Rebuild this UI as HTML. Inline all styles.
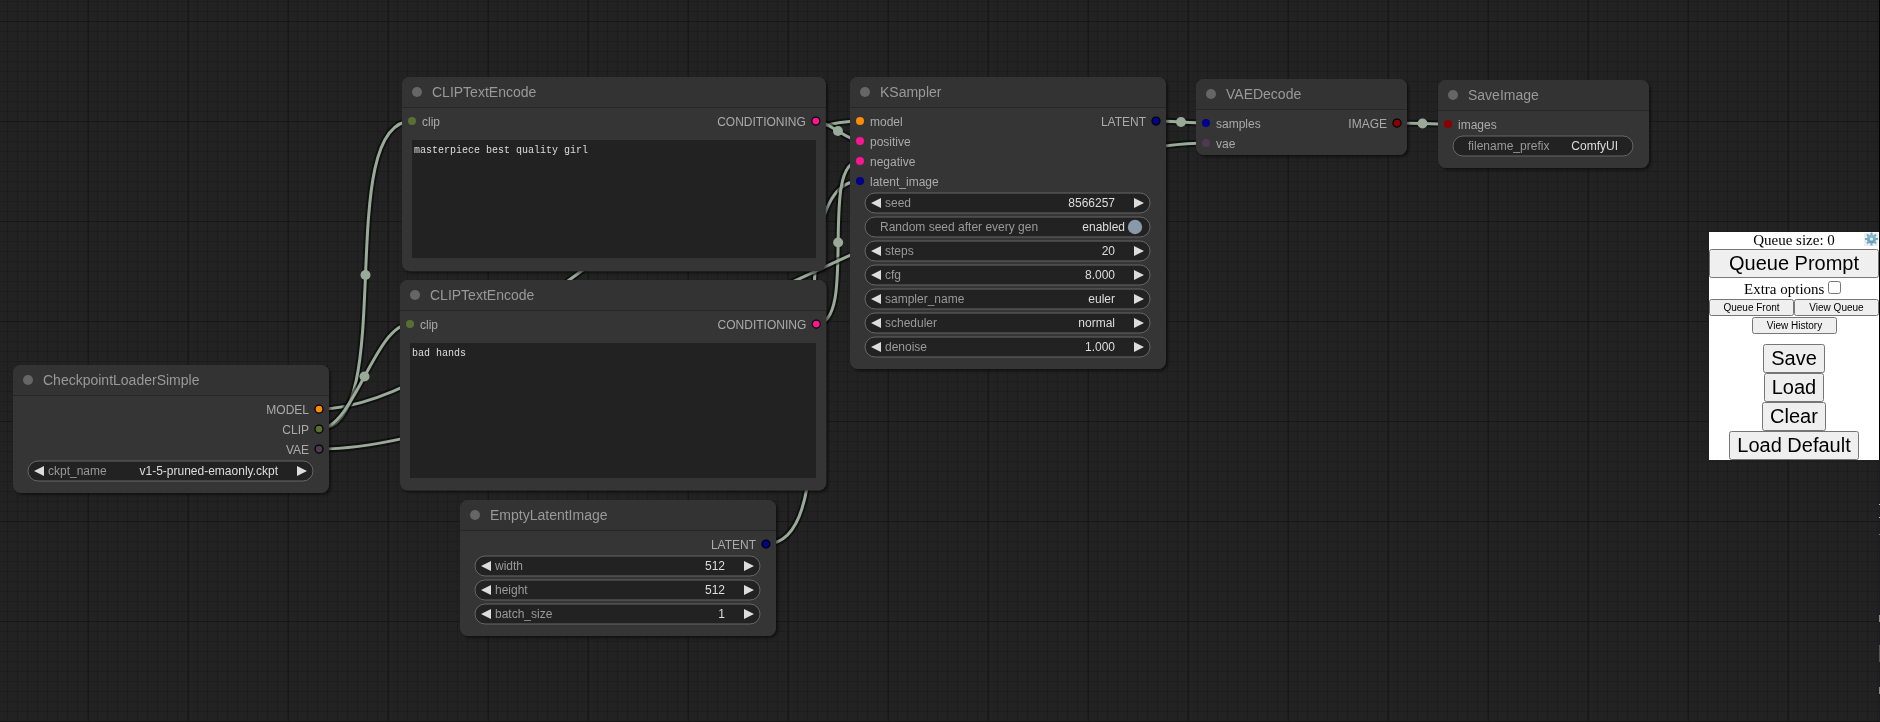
<!DOCTYPE html>
<html><head><meta charset="utf-8"><title>ComfyUI</title>
<style>
html,body{margin:0;padding:0;width:1880px;height:722px;overflow:hidden;background:#222;}
#main{position:absolute;left:0;top:0;will-change:transform;}
.tt{font:14px "Liberation Sans",sans-serif;fill:#999;}
.st{font:12px "Liberation Sans",sans-serif;fill:#aaa;}
.wl{font:12px "Liberation Sans",sans-serif;fill:#999;}
.wv{font:12px "Liberation Sans",sans-serif;fill:#ddd;}
.ta{position:absolute;background:#222;color:#ddd;font:10px/1.15 "Liberation Mono",monospace;padding:5px 2px 2px 2px;box-sizing:border-box;white-space:pre-wrap;overflow:hidden;z-index:1;will-change:transform;}
.menu{position:absolute;left:1709px;top:232px;width:170px;height:228px;background:#fff;color:#000;text-align:center;font:15px "Liberation Serif",serif;z-index:100;will-change:transform;}
.menu .b{position:absolute;font-family:"Liberation Sans",sans-serif;padding:0;margin:0;box-sizing:border-box;color:#000;}
.qs{position:absolute;left:0;top:0;width:170px;height:17px;line-height:17px;}
.gear{position:absolute;left:155px;top:1px;width:14px;height:13px;background:#eee;}
.gsvg{position:absolute;left:148px;top:-7px;}
.eo{position:absolute;left:0;top:47px;width:170px;height:20px;line-height:20px;}
.eo input{position:absolute;left:119px;top:2px;margin:0;width:13px;height:13px;}
</style></head><body>
<svg id="main" width="1880" height="722" viewBox="0 0 1880 722">
<defs>
<pattern id="gmin" width="10" height="10" patternUnits="userSpaceOnUse" x="7" y="1"><rect width="10" height="1" fill="#1d1d1d"/><rect width="1" height="10" fill="#1d1d1d"/></pattern>
<pattern id="gmaj" width="100" height="100" patternUnits="userSpaceOnUse" x="88" y="21"><rect width="100" height="1" fill="#171717"/><rect width="1" height="100" fill="#181818"/></pattern>
<filter id="sh" x="-10%" y="-10%" width="130%" height="130%"><feDropShadow dx="2" dy="2" stdDeviation="1.5" flood-color="#000" flood-opacity="0.5"/></filter>
</defs>
<rect width="1880" height="722" fill="#222"/>
<rect width="1880" height="722" fill="url(#gmin)"/>
<rect width="1880" height="722" fill="url(#gmaj)"/>
<g fill="none" stroke-linejoin="round">
<path d="M319 409C472.22 409 706.78 121 860 121" stroke="rgba(0,0,0,0.5)" stroke-width="7"/>
<path d="M319 409C472.22 409 706.78 121 860 121" stroke="#9a9" stroke-width="3"/>
<path d="M766 544C859.74 544 766.26 181 860 181" stroke="rgba(0,0,0,0.5)" stroke-width="7"/>
<path d="M766 544C859.74 544 766.26 181 860 181" stroke="#9a9" stroke-width="3"/>
<path d="M319 429C399.43 429 331.57 121 412 121" stroke="rgba(0,0,0,0.5)" stroke-width="7"/>
<path d="M319 429C399.43 429 331.57 121 412 121" stroke="#9a9" stroke-width="3"/>
<path d="M815.85 121C827.96 121 847.88 141 860 141" stroke="rgba(0,0,0,0.5)" stroke-width="7"/>
<path d="M815.85 121C827.96 121 847.88 141 860 141" stroke="#9a9" stroke-width="3"/>
<path d="M319 429C353.74 429 375.26 324 410 324" stroke="rgba(0,0,0,0.5)" stroke-width="7"/>
<path d="M319 429C353.74 429 375.26 324 410 324" stroke="#9a9" stroke-width="3"/>
<path d="M816.28 324C858.47 324 817.81 161 860 161" stroke="rgba(0,0,0,0.5)" stroke-width="7"/>
<path d="M816.28 324C858.47 324 817.81 161 860 161" stroke="#9a9" stroke-width="3"/>
<path d="M1156 121C1168.51 121 1193.49 123 1206 123" stroke="rgba(0,0,0,0.5)" stroke-width="7"/>
<path d="M1156 121C1168.51 121 1193.49 123 1206 123" stroke="#9a9" stroke-width="3"/>
<path d="M319 449C553.57 449 971.43 143 1206 143" stroke="rgba(0,0,0,0.5)" stroke-width="7"/>
<path d="M319 449C553.57 449 971.43 143 1206 143" stroke="#9a9" stroke-width="3"/>
<path d="M1397 123C1409.75 123 1435.25 124 1448 124" stroke="rgba(0,0,0,0.5)" stroke-width="7"/>
<path d="M1397 123C1409.75 123 1435.25 124 1448 124" stroke="#9a9" stroke-width="3"/>
</g>
<g fill="#9a9">
<circle cx="589.5" cy="265" r="5"/>
<circle cx="813" cy="362.5" r="5"/>
<circle cx="365.5" cy="275" r="5"/>
<circle cx="837.92" cy="131" r="5"/>
<circle cx="364.5" cy="376.5" r="5"/>
<circle cx="838.14" cy="242.5" r="5"/>
<circle cx="1181" cy="122" r="5"/>
<circle cx="762.5" cy="296" r="5"/>
<circle cx="1422.5" cy="123.5" r="5"/>
</g>
<g transform="translate(400 310)">
<rect x="0" y="-30" width="426.28" height="210.61" rx="8" fill="#353535" filter="url(#sh)"/>
<path d="M0 -22a8 8 0 0 1 8 -8H418.28a8 8 0 0 1 8 8V0H0Z" fill="#333"/>
<rect x="0" y="0" width="426.28" height="1" fill="rgba(0,0,0,0.25)"/>
<circle cx="15" cy="-15" r="5" fill="#666"/>
<text x="30" y="-10" class="tt">CLIPTextEncode</text>
<circle cx="10" cy="14" r="4" fill="#5a7032"/>
<text x="20" y="19" class="st">clip</text>
<circle cx="416.28" cy="14" r="4" fill="#ff1493" stroke="#000" stroke-width="1.25"/>
<text x="406.28" y="19" class="st" text-anchor="end">CONDITIONING</text>
</g>
<g transform="translate(402 107)">
<rect x="0" y="-30" width="423.85" height="194.31" rx="8" fill="#353535" filter="url(#sh)"/>
<path d="M0 -22a8 8 0 0 1 8 -8H415.85a8 8 0 0 1 8 8V0H0Z" fill="#333"/>
<rect x="0" y="0" width="423.85" height="1" fill="rgba(0,0,0,0.25)"/>
<circle cx="15" cy="-15" r="5" fill="#666"/>
<text x="30" y="-10" class="tt">CLIPTextEncode</text>
<circle cx="10" cy="14" r="4" fill="#5a7032"/>
<text x="20" y="19" class="st">clip</text>
<circle cx="413.85" cy="14" r="4" fill="#ff1493" stroke="#000" stroke-width="1.25"/>
<text x="403.85" y="19" class="st" text-anchor="end">CONDITIONING</text>
</g>
<g transform="translate(460 530)">
<rect x="0" y="-30" width="316" height="136" rx="8" fill="#353535" filter="url(#sh)"/>
<path d="M0 -22a8 8 0 0 1 8 -8H308a8 8 0 0 1 8 8V0H0Z" fill="#333"/>
<rect x="0" y="0" width="316" height="1" fill="rgba(0,0,0,0.25)"/>
<circle cx="15" cy="-15" r="5" fill="#666"/>
<text x="30" y="-10" class="tt">EmptyLatentImage</text>
<circle cx="306" cy="14" r="4" fill="#00008b" stroke="#000" stroke-width="1.25"/>
<text x="296" y="19" class="st" text-anchor="end">LATENT</text>
<rect x="15" y="26" width="285" height="20" rx="10" fill="#222" stroke="#666" stroke-width="1"/>
<path d="M31 31L21 36L31 41ZM284 31L294 36L284 41Z" fill="#ddd"/>
<text x="35" y="40" class="wl">width</text>
<text x="265" y="40" class="wv" text-anchor="end">512</text>
<rect x="15" y="50" width="285" height="20" rx="10" fill="#222" stroke="#666" stroke-width="1"/>
<path d="M31 55L21 60L31 65ZM284 55L294 60L284 65Z" fill="#ddd"/>
<text x="35" y="64" class="wl">height</text>
<text x="265" y="64" class="wv" text-anchor="end">512</text>
<rect x="15" y="74" width="285" height="20" rx="10" fill="#222" stroke="#666" stroke-width="1"/>
<path d="M31 79L21 84L31 89ZM284 79L294 84L284 89Z" fill="#ddd"/>
<text x="35" y="88" class="wl">batch_size</text>
<text x="265" y="88" class="wv" text-anchor="end">1</text>
</g>
<g transform="translate(850 107)">
<rect x="0" y="-30" width="316" height="292" rx="8" fill="#353535" filter="url(#sh)"/>
<path d="M0 -22a8 8 0 0 1 8 -8H308a8 8 0 0 1 8 8V0H0Z" fill="#333"/>
<rect x="0" y="0" width="316" height="1" fill="rgba(0,0,0,0.25)"/>
<circle cx="15" cy="-15" r="5" fill="#666"/>
<text x="30" y="-10" class="tt">KSampler</text>
<circle cx="10" cy="14" r="4" fill="#ff8c00"/>
<text x="20" y="19" class="st">model</text>
<circle cx="10" cy="34" r="4" fill="#ff1493"/>
<text x="20" y="39" class="st">positive</text>
<circle cx="10" cy="54" r="4" fill="#ff1493"/>
<text x="20" y="59" class="st">negative</text>
<circle cx="10" cy="74" r="4" fill="#00008b"/>
<text x="20" y="79" class="st">latent_image</text>
<circle cx="306" cy="14" r="4" fill="#00008b" stroke="#000" stroke-width="1.25"/>
<text x="296" y="19" class="st" text-anchor="end">LATENT</text>
<rect x="15" y="86" width="285" height="20" rx="10" fill="#222" stroke="#666" stroke-width="1"/>
<path d="M31 91L21 96L31 101ZM284 91L294 96L284 101Z" fill="#ddd"/>
<text x="35" y="100" class="wl">seed</text>
<text x="265" y="100" class="wv" text-anchor="end">8566257</text>
<rect x="15" y="110" width="285" height="20" rx="10" fill="#222" stroke="#666" stroke-width="1"/>
<circle cx="285" cy="120" r="7.2" fill="#89a"/>
<text x="30" y="124" class="wl">Random seed after every gen</text>
<text x="275" y="124" class="wv" text-anchor="end">enabled</text>
<rect x="15" y="134" width="285" height="20" rx="10" fill="#222" stroke="#666" stroke-width="1"/>
<path d="M31 139L21 144L31 149ZM284 139L294 144L284 149Z" fill="#ddd"/>
<text x="35" y="148" class="wl">steps</text>
<text x="265" y="148" class="wv" text-anchor="end">20</text>
<rect x="15" y="158" width="285" height="20" rx="10" fill="#222" stroke="#666" stroke-width="1"/>
<path d="M31 163L21 168L31 173ZM284 163L294 168L284 173Z" fill="#ddd"/>
<text x="35" y="172" class="wl">cfg</text>
<text x="265" y="172" class="wv" text-anchor="end">8.000</text>
<rect x="15" y="182" width="285" height="20" rx="10" fill="#222" stroke="#666" stroke-width="1"/>
<path d="M31 187L21 192L31 197ZM284 187L294 192L284 197Z" fill="#ddd"/>
<text x="35" y="196" class="wl">sampler_name</text>
<text x="265" y="196" class="wv" text-anchor="end">euler</text>
<rect x="15" y="206" width="285" height="20" rx="10" fill="#222" stroke="#666" stroke-width="1"/>
<path d="M31 211L21 216L31 221ZM284 211L294 216L284 221Z" fill="#ddd"/>
<text x="35" y="220" class="wl">scheduler</text>
<text x="265" y="220" class="wv" text-anchor="end">normal</text>
<rect x="15" y="230" width="285" height="20" rx="10" fill="#222" stroke="#666" stroke-width="1"/>
<path d="M31 235L21 240L31 245ZM284 235L294 240L284 245Z" fill="#ddd"/>
<text x="35" y="244" class="wl">denoise</text>
<text x="265" y="244" class="wv" text-anchor="end">1.000</text>
</g>
<g transform="translate(1196 109)">
<rect x="0" y="-30" width="211" height="76" rx="8" fill="#353535" filter="url(#sh)"/>
<path d="M0 -22a8 8 0 0 1 8 -8H203a8 8 0 0 1 8 8V0H0Z" fill="#333"/>
<rect x="0" y="0" width="211" height="1" fill="rgba(0,0,0,0.25)"/>
<circle cx="15" cy="-15" r="5" fill="#666"/>
<text x="30" y="-10" class="tt">VAEDecode</text>
<circle cx="10" cy="14" r="4" fill="#00008b"/>
<text x="20" y="19" class="st">samples</text>
<circle cx="10" cy="34" r="4" fill="#503850"/>
<text x="20" y="39" class="st">vae</text>
<circle cx="201" cy="14" r="4" fill="#8b0000" stroke="#000" stroke-width="1.25"/>
<text x="191" y="19" class="st" text-anchor="end">IMAGE</text>
</g>
<g transform="translate(1438 110)">
<rect x="0" y="-30" width="211" height="88" rx="8" fill="#353535" filter="url(#sh)"/>
<path d="M0 -22a8 8 0 0 1 8 -8H203a8 8 0 0 1 8 8V0H0Z" fill="#333"/>
<rect x="0" y="0" width="211" height="1" fill="rgba(0,0,0,0.25)"/>
<circle cx="15" cy="-15" r="5" fill="#666"/>
<text x="30" y="-10" class="tt">SaveImage</text>
<circle cx="10" cy="14" r="4" fill="#8b0000"/>
<text x="20" y="19" class="st">images</text>
<rect x="15" y="26" width="180" height="20" rx="10" fill="#222" stroke="#666" stroke-width="1"/>
<text x="30" y="40" class="wl">filename_prefix</text>
<text x="180" y="40" class="wv" text-anchor="end">ComfyUI</text>
</g>
<g transform="translate(13 395)">
<rect x="0" y="-30" width="316" height="128" rx="8" fill="#353535" filter="url(#sh)"/>
<path d="M0 -22a8 8 0 0 1 8 -8H308a8 8 0 0 1 8 8V0H0Z" fill="#333"/>
<rect x="0" y="0" width="316" height="1" fill="rgba(0,0,0,0.25)"/>
<circle cx="15" cy="-15" r="5" fill="#666"/>
<text x="30" y="-10" class="tt">CheckpointLoaderSimple</text>
<circle cx="306" cy="14" r="4" fill="#ff8c00" stroke="#000" stroke-width="1.25"/>
<text x="296" y="19" class="st" text-anchor="end">MODEL</text>
<circle cx="306" cy="34" r="4" fill="#5a7032" stroke="#000" stroke-width="1.25"/>
<text x="296" y="39" class="st" text-anchor="end">CLIP</text>
<circle cx="306" cy="54" r="4" fill="#503850" stroke="#000" stroke-width="1.25"/>
<text x="296" y="59" class="st" text-anchor="end">VAE</text>
<rect x="15" y="66" width="285" height="20" rx="10" fill="#222" stroke="#666" stroke-width="1"/>
<path d="M31 71L21 76L31 81ZM284 71L294 76L284 81Z" fill="#ddd"/>
<text x="35" y="80" class="wl">ckpt_name</text>
<text x="265" y="80" class="wv" text-anchor="end">v1-5-pruned-emaonly.ckpt</text>
</g>
</svg>
<div class="ta" style="left:410px;top:343px;width:406.28px;height:134.61px">bad hands</div>
<div class="ta" style="left:412px;top:140px;width:403.85px;height:118.31px">masterpiece best quality girl</div>
<div style="position:absolute;left:1879px;top:0;width:1px;height:460px;background:#000;z-index:200"></div>
<div style="position:absolute;left:1879px;top:460px;width:1px;height:262px;background:#1b1d1e;z-index:200"></div>
<div style="position:absolute;left:1879px;top:504px;width:1px;height:1px;background:#bbb;z-index:201"></div>
<div style="position:absolute;left:1879px;top:517px;width:1px;height:1px;background:#bbb;z-index:201"></div>
<div style="position:absolute;left:1879px;top:534px;width:1px;height:1px;background:#777;z-index:201"></div>
<div style="position:absolute;left:1879px;top:615px;width:1px;height:7px;background:#888;z-index:201"></div>
<div style="position:absolute;left:1879px;top:645px;width:1px;height:17px;background:#555;z-index:201"></div>
<div style="position:absolute;left:1879px;top:687px;width:1px;height:7px;background:#888;z-index:201"></div>
<div class="menu">
<div class="qs">Queue size: 0</div>
<div class="gear"></div><svg class="gsvg" width="29" height="29" viewBox="0 0 29 29"><defs><linearGradient id="gg" x1="0" y1="0" x2="0" y2="1"><stop offset="0" stop-color="#8fc3d8"/><stop offset="1" stop-color="#5d98b3"/></linearGradient></defs><g transform="translate(14.5 14)"><g fill="url(#gg)"><path d="M0 -4.6A4.6 4.6 0 1 1 0 4.6A4.6 4.6 0 1 1 0 -4.6ZM0 -1.6A1.6 1.6 0 1 0 0 1.6A1.6 1.6 0 1 0 0 -1.6Z" fill-rule="evenodd"/></g><g fill="#72aac4"><rect x="-1" y="-6.5" width="2" height="2.4"/><rect x="-1" y="4.1" width="2" height="2.4"/><rect x="-6.5" y="-1" width="2.4" height="2"/><rect x="4.1" y="-1" width="2.4" height="2"/><g transform="rotate(45)"><rect x="-1" y="-6.3" width="2" height="2.2"/><rect x="-1" y="4.1" width="2" height="2.2"/><rect x="-6.3" y="-1" width="2.2" height="2"/><rect x="4.1" y="-1" width="2.2" height="2"/></g></g></g></svg>
<button class="b" style="left:0;top:17px;width:170px;height:29px;font-size:20px">Queue Prompt</button>
<div class="eo"><span style="position:absolute;left:35px;top:0">Extra options</span><input type="checkbox"></div>
<button class="b" style="left:0;top:67px;width:85px;height:17px;font-size:10px">Queue Front</button>
<button class="b" style="left:85px;top:67px;width:85px;height:17px;font-size:10px">View Queue</button>
<button class="b" style="left:43px;top:85px;width:85px;height:17px;font-size:10px">View History</button>
<button class="b" style="left:54px;top:112px;width:62px;height:29px;font-size:20px">Save</button>
<button class="b" style="left:55px;top:141px;width:60px;height:29px;font-size:20px">Load</button>
<button class="b" style="left:53px;top:170px;width:64px;height:29px;font-size:20px">Clear</button>
<button class="b" style="left:20px;top:199px;width:130px;height:29px;font-size:20px">Load Default</button>
</div>
</body></html>
